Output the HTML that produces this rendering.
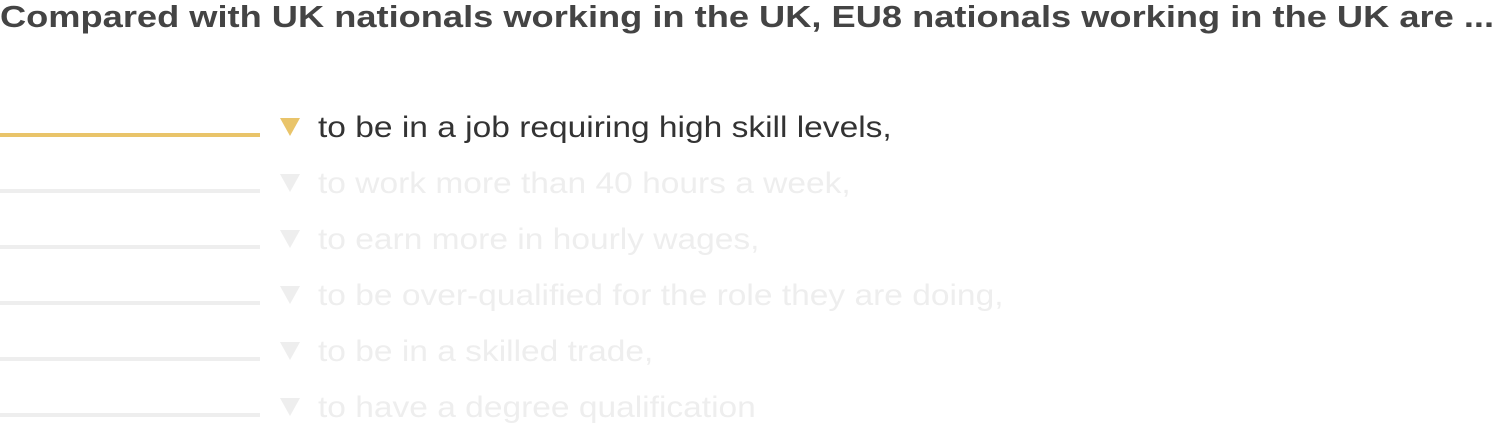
<!DOCTYPE html>
<html><head><style>
body{margin:0;width:1494px;height:427px;background:#fff;font-family:"Liberation Sans",sans-serif;position:relative;overflow:hidden}
h1{position:absolute;left:0;top:-1px;margin:0;font-size:31px;font-weight:bold;color:#444;white-space:nowrap;transform:scaleX(1.169);transform-origin:0 0}
.row{position:absolute;left:0;height:40px;width:1494px}
.ln{position:absolute;left:0;width:260px;height:4px;background:#eee}
.tri{position:absolute;left:280px;width:0;height:0;border-left:10px solid transparent;border-right:10px solid transparent;border-top:18px solid #eee}
.tx{position:absolute;left:318px;font-size:30px;color:#eee;white-space:nowrap;transform:scaleX(1.117);transform-origin:0 0}
.on .ln{background:#e9c46a}.on .tri{border-top-color:#e9c46a}.on .tx{color:#333}
</style></head><body>
<h1>Compared with UK nationals working in the UK, EU8 nationals working in the UK are ...</h1>
<div class="row on" style="top:110px"><div class="ln" style="top:23px"></div><div class="tri" style="top:8px"></div><div class="tx" style="top:1px">to be in a job requiring high skill levels,</div></div>
<div class="row" style="top:166px"><div class="ln" style="top:23px"></div><div class="tri" style="top:8px"></div><div class="tx" style="top:1px">to work more than 40 hours a week,</div></div>
<div class="row" style="top:222px"><div class="ln" style="top:23px"></div><div class="tri" style="top:8px"></div><div class="tx" style="top:1px">to earn more in hourly wages,</div></div>
<div class="row" style="top:278px"><div class="ln" style="top:23px"></div><div class="tri" style="top:8px"></div><div class="tx" style="top:1px">to be over-qualified for the role they are doing,</div></div>
<div class="row" style="top:334px"><div class="ln" style="top:23px"></div><div class="tri" style="top:8px"></div><div class="tx" style="top:1px">to be in a skilled trade,</div></div>
<div class="row" style="top:390px"><div class="ln" style="top:23px"></div><div class="tri" style="top:8px"></div><div class="tx" style="top:1px">to have a degree qualification</div></div>
</body></html>
